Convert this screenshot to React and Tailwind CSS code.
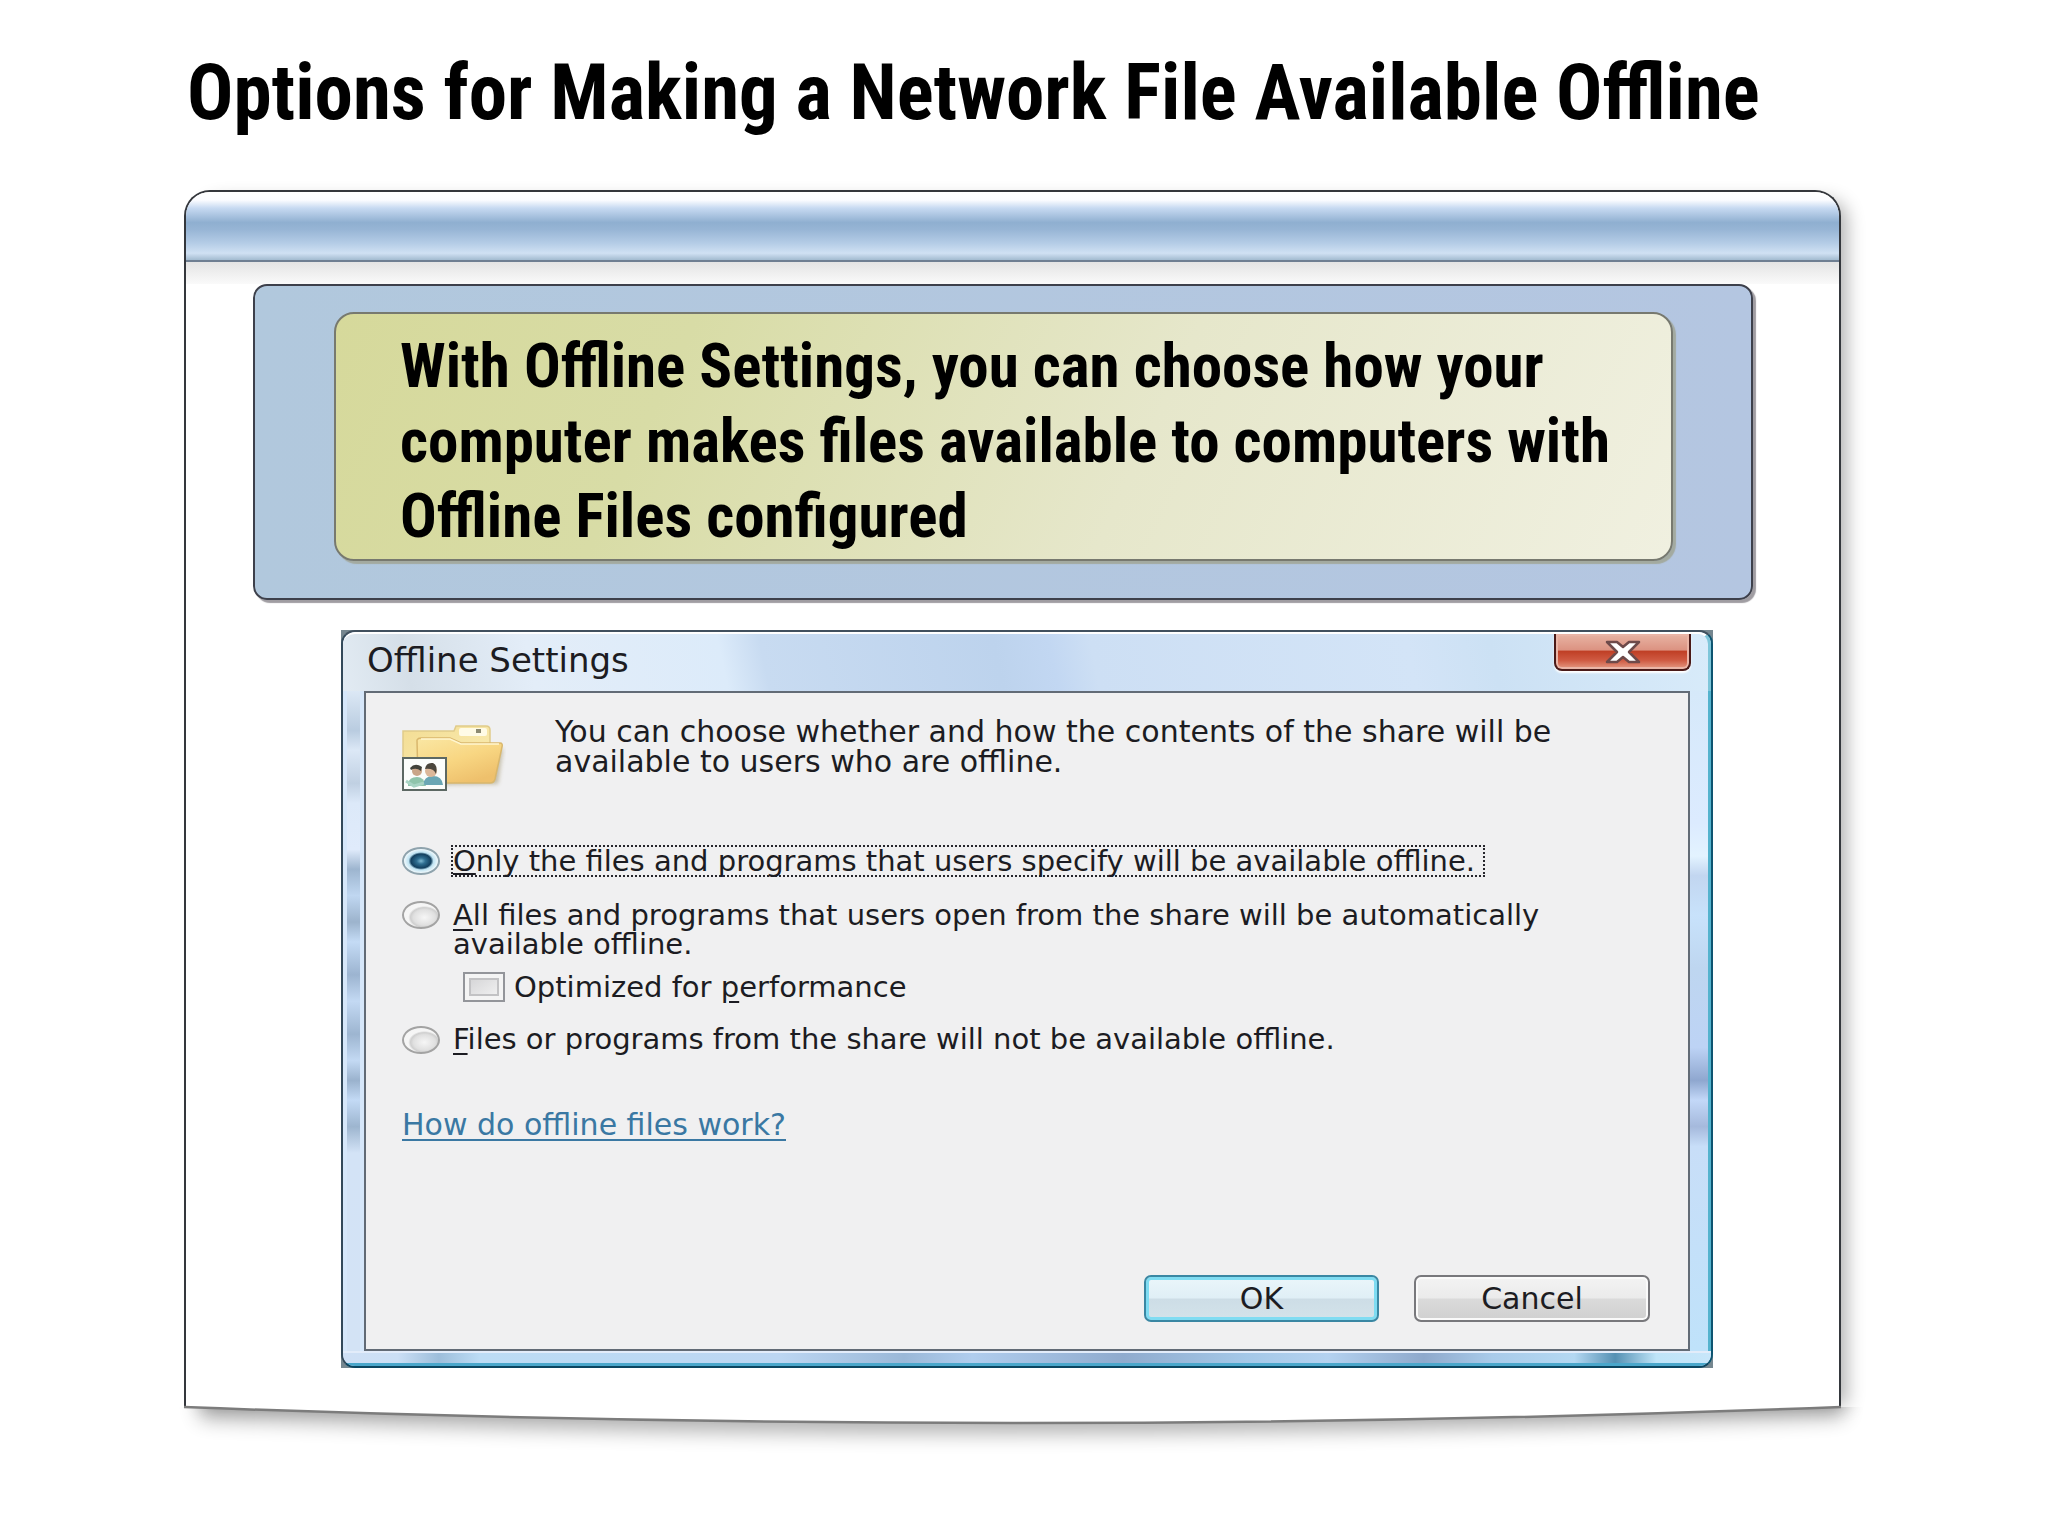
function FolderIcon() {
  return (
    <svg viewBox="0 0 104 68" className="mt-2 h-[68px] w-[104px] shrink-0" aria-hidden="true">
      <defs>
        <linearGradient id="folderBack" x1="0" y1="0" x2="1" y2="1">
          <stop offset="0" stopColor="#f3dd94" />
          <stop offset="1" stopColor="#fbeeb6" />
        </linearGradient>
        <linearGradient id="folderFront" x1="0" y1="0" x2="0.6" y2="1">
          <stop offset="0" stopColor="#fae7a4" />
          <stop offset="0.55" stopColor="#f8d682" />
          <stop offset="1" stopColor="#eec06c" />
        </linearGradient>
        <filter id="soft" x="-20%" y="-20%" width="140%" height="140%">
          <feGaussianBlur stdDeviation="2" />
        </filter>
      </defs>
      <path d="M14 20 L101 24 L96 59 L16 60 Z" fill="#8a7a4a" opacity="0.45" filter="url(#soft)" />
      <path d="M1 6 H52 L54 1 H84 Q88 1 88 5 V56 H6 L1 50 Z" fill="url(#folderBack)" stroke="#e0cb8a" strokeWidth="1.5" />
      <rect x="57" y="3" width="28" height="8" rx="2" fill="#fffbe6" />
      <rect x="74" y="4" width="5" height="4" fill="#8c8a72" />
      <path d="M15 15 Q16 13 19 13 H48 L59 18 H98 Q101 18 100 22 L93 54 Q92 58 88 58 H16 Z" fill="url(#folderFront)" stroke="#d9b76c" strokeWidth="1.5" />
      <path d="M19 14 H48 L59 19 H97" fill="none" stroke="#fff6cf" strokeWidth="1.5" />
      <rect x="1" y="33" width="43" height="32" fill="#fbfdfb" stroke="#5c6863" strokeWidth="2" />
      <path d="M6 59 Q7 52 15 52 Q22 52 24 61 H6 Z" fill="#8fc4ab" />
      <path d="M21 60 Q22 51 31 51 Q40 51 41 60 Z" fill="#6aa6b4" />
      <path d="M4 56 L12 61 L22 58" fill="none" stroke="#a8d4c4" strokeWidth="3" />
      <circle cx="15" cy="46" r="5" fill="#c9a588" />
      <path d="M8 43 Q13 37 20 42 L19 46 Q14 42 9 45 Z" fill="#40423a" />
      <circle cx="29" cy="46" r="6" fill="#dcb89a" />
      <path d="M23 44 Q24 37 31 38 Q36 40 34 49 Q32 43 23 44 Z" fill="#4a463c" />
    </svg>
  );
}

function PageCurl() {
  return (
    <svg viewBox="0 0 1657 60" preserveAspectRatio="none" className="block h-[60px] w-full overflow-visible" aria-hidden="true">
      <defs>
        <filter id="curlShadow" x="-5%" y="-100%" width="110%" height="300%">
          <feGaussianBlur stdDeviation="10" />
        </filter>
        <clipPath id="belowPage">
          <path d="M-30 0 H1 Q828 32 1656 0 H1700 V80 H-30 Z" />
        </clipPath>
      </defs>
      <g clipPath="url(#belowPage)">
        <path d="M14 -20 H1660 V10 Q828 42 16 12 Z" fill="#000" opacity="0.3" filter="url(#curlShadow)" />
      </g>
      <path d="M2 -4 H1655 V0 Q828 32 2 0 Z" fill="#fff" />
      <path d="M0 0 Q828 32 1657 0" fill="none" stroke="#7c7c7c" strokeWidth="2.5" />
    </svg>
  );
}

const radioBase =
  "h-7 w-[38px] shrink-0 appearance-none rounded-[50%] border-2 border-[#a3a3a3] bg-[radial-gradient(ellipse_at_60%_60%,#f6f6f6_0%,#e0e0e0_38%,#cfcfcf_48%,#f6f6f6_56%,#f4f4f4_100%)] checked:border-[#8fa3ad] checked:bg-[radial-gradient(ellipse_at_center,#7fb9d2_0%,#2f6f92_18%,#123f5e_42%,#bfe3f2_52%,#eef8fc_70%)]";

export default function App() {
  return (
    <main className="min-h-screen bg-white pr-[207px] pl-[184px] text-black">
      <h1 className="pt-12 pl-[3px] text-[77px] leading-[90px] font-bold [font-family:'Roboto_Condensed','Liberation_Sans',sans-serif]">
        Options for Making a Network File Available Offline
      </h1>

      <section className="mt-[52px]">
        <div className="rounded-t-[26px] border-2 border-b-0 border-[#34373c] bg-white pb-[39px] shadow-[12px_4px_18px_-6px_rgba(0,0,0,0.3)]">
          <div className="h-[70px] rounded-t-[24px] border-b-2 border-[#6f7f92] bg-[linear-gradient(to_bottom,#ffffff_0%,#fbfcff_12%,#c6d9f1_24%,#8fafd0_45%,#97b5d5_55%,#b4cce6_75%,#d0e1f3_90%,#a3bbd0_100%)]" />
          <div className="h-[22px] bg-linear-to-b from-[#e4e4e4] to-[#fafafa]" />

          <div className="mr-[86px] ml-[67px] rounded-[14px] border-2 border-[#3d404b] bg-linear-to-r from-[#b1c8dd] to-[#b4c6e1] pt-[26px] pr-[78px] pb-[37px] pl-[79px] shadow-[3px_3px_1px_#a09da2]">
            <p className="rounded-[20px] border-2 border-[#77796f] bg-[linear-gradient(115deg,#d6d99b_0%,#d8dca6_25%,#e6e7cb_60%,#f0f0e0_100%)] pt-[15px] pr-10 pb-[5px] pl-16 text-[61px] leading-[75px] font-bold shadow-[3px_3px_1px_#a3aaa0] [font-family:'Roboto_Condensed','Liberation_Sans',sans-serif]">
              With Offline Settings, you can choose how your
              <br />
              computer makes files available to computers with
              <br />
              Offline Files configured
            </p>
          </div>

          <div className="mt-[30px] mr-[126px] ml-[155px] bg-[#75868f] text-[30px] leading-[30px] text-[#1c1c22] [font-family:'DejaVu_Sans',sans-serif]">
            <form className="overflow-hidden rounded-[14px] border-2 border-t-[#41505e] border-r-[#0d5470] border-b-[#0b4560] border-l-[#33495a] bg-[#cfe0f4]" onSubmit={(e) => e.preventDefault()}>
              <header className="flex h-[59px] items-start justify-between rounded-t-[12px] border-t-2 border-r-[3px] border-t-white border-r-[#7ec6da] bg-[linear-gradient(78deg,#e2ebf3_0%,#d5dfe8_5%,#e3edf8_14%,#dcebfa_28%,#c8dbf1_31%,#bdd3ed_48%,#c2d7f2_52%,#cddff4_55%,#d3e4f7_78%,#cce1f4_84%,#d8ebfa_100%)] pr-[17px] pl-6">
                <h2 className="pt-[9px] text-[34px] leading-[34px]">Offline Settings</h2>
                <button type="button" aria-label="Close" className="flex h-[37px] w-[137px] items-center justify-center rounded-b-[8px] border-2 border-t-0 border-[#4a1a18] bg-[linear-gradient(to_bottom,#e8b4a4_0%,#dc9382_45%,#c04026_50%,#cf5a42_75%,#e69c86_100%)] shadow-[inset_0_0_0_2px_#eab5a7,0_2px_2px_#ffffff]">
                  <svg viewBox="0 0 36 24" className="h-6 w-9" aria-hidden="true">
                    <path d="M2 2 H12 L18 7 L24 2 H34 L24 12 L34 22 H24 L18 17 L12 22 H2 L12 12 Z" fill="#fff" stroke="#6e4a4a" strokeWidth="2.5" strokeLinejoin="round" />
                  </svg>
                </button>
              </header>

              <div className="flex">
                <div className="w-[21px] shrink-0 border-x-4 border-[#d6e7fa] bg-[linear-gradient(to_bottom,#dce8f5_0%,#b9cce0_6%,#dce8f6_9%,#c0d0e2_14%,#dce9f9_17%,#e0ebfb_24%,#9db5cf_27%,#c0d7f1_31%,#9cb3cc_35%,#c4dbf5_38%,#9cb4d0_43%,#c3d9f3_47%,#9db5d0_52%,#c3d9f3_56%,#9ab2cd_59%,#c3daf5_62%,#9db5cf_66%,#d3e3f6_70%,#d3e3f5_100%)]" />
                <div className="min-w-0 flex-1 border-2 border-[#626b76] bg-[#f0f0f1] pt-[24px] pr-[38px] pb-[27px] pl-9">
                  <div className="flex gap-[49px]">
                    <FolderIcon />
                    <p>
                      You can choose whether and how the contents of the share will be
                      <br />
                      available to users who are offline.
                    </p>
                  </div>

                  <fieldset className="mt-[52px] text-[29px] leading-[29px]">
                    <div className="flex items-center gap-[11px]">
                      <input id="only" type="radio" name="mode" defaultChecked className={radioBase} />
                      <label htmlFor="only" className="border-2 border-dotted border-[#26262c] pr-2 leading-[28px]">
                        <u className="underline-offset-2">O</u>nly the files and programs that users specify will be available offline.
                      </label>
                    </div>
                    <div className="mt-6 flex items-start gap-[13px]">
                      <input id="all" type="radio" name="mode" className={radioBase} />
                      <label htmlFor="all">
                        <u className="underline-offset-4">A</u>ll files and programs that users open from the share will be automatically
                        <br />
                        available offline.
                      </label>
                    </div>
                    <div className="mt-[13px] ml-[61px] flex items-center gap-[9px]">
                      <input id="perf" type="checkbox" className="h-[30px] w-[42px] shrink-0 appearance-none border-2 border-[#93959a] bg-linear-to-br from-[#cfcfd1] to-[#f7f7f7] shadow-[inset_0_0_0_4px_#f4f4f4,inset_0_0_0_6px_#c2c2c4]" />
                      <label htmlFor="perf">
                        Optimized for <u className="underline-offset-4">p</u>erformance
                      </label>
                    </div>
                    <div className="mt-[23px] flex items-center gap-[13px]">
                      <input id="none" type="radio" name="mode" className={radioBase} />
                      <label htmlFor="none">
                        <u className="underline-offset-4">F</u>iles or programs from the share will not be available offline.
                      </label>
                    </div>
                  </fieldset>

                  <a href="#help" className="mt-14 block w-fit text-[#3a78a3] underline decoration-2 underline-offset-4">
                    How do offline files work?
                  </a>

                  <div className="mt-[135px] flex justify-end gap-[35px]">
                    <button type="submit" className="h-[47px] w-[235px] rounded-[7px] border-2 border-[#3a87a3] bg-[linear-gradient(to_bottom,#eaf6fa_0%,#e0eff6_48%,#cddde6_52%,#d3e3ea_100%)] shadow-[inset_0_0_0_3px_#7fdcf2]">
                      OK
                    </button>
                    <button type="button" className="h-[47px] w-[236px] rounded-[7px] border-2 border-[#78787c] bg-[linear-gradient(to_bottom,#f3f3f3_0%,#ebebeb_48%,#dadada_52%,#d0d0d0_100%)] shadow-[inset_0_0_0_2px_#fafafa]">
                      Cancel
                    </button>
                  </div>
                </div>
                <div className="w-[21px] shrink-0 border-r-[3px] border-[#54b3ce] bg-[linear-gradient(to_bottom,#d6e9fa_0%,#dcebff_20%,#e3f3ff_25%,#c2d6f0_28%,#c8e2fb_34%,#bed6f0_42%,#bdd3f5_54%,#8fa7cf_59%,#c3d8f8_62%,#a5b9dc_66%,#c8def8_69%,#bfe2fa_100%)]" />
              </div>
              <div className="h-[15px] border-t-2 border-b-[3px] border-t-[#e2ecfa] border-b-[#4aa7cb] bg-[linear-gradient(to_right,#cfe0f5_0%,#cbdff5_4%,#9dbedb_7%,#bcdcf5_10%,#bcd6f2_32%,#9ab8d8_41%,#b0cdee_46%,#8fabce_57%,#a4c8e8_66%,#b4d2f0_72%,#8ea9cc_79%,#a9cbea_84%,#b4d8f2_90%,#5591b4_93%,#bfe4f8_96%,#c8e6fa_100%)]" />
            </form>
          </div>
        </div>
        <PageCurl />
      </section>
    </main>
  );
}
